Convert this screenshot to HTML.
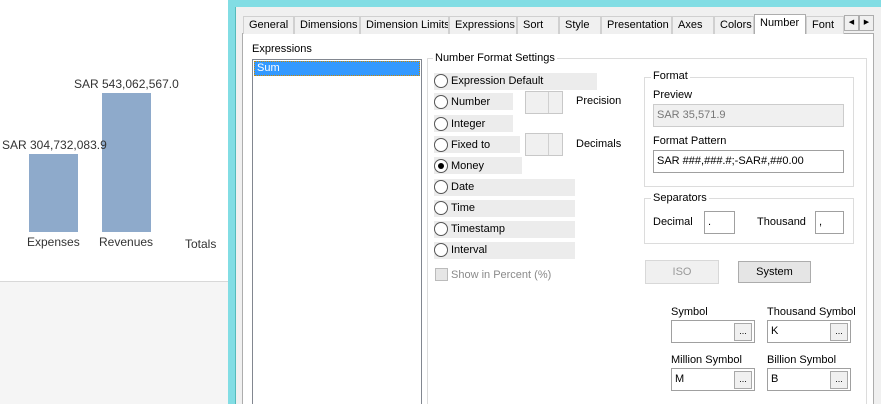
<!DOCTYPE html>
<html><head><meta charset="utf-8"><style>
*{margin:0;padding:0;box-sizing:border-box}
html,body{width:881px;height:404px;overflow:hidden}
body{position:relative;background:#f0f0f0;font-family:"Liberation Sans",sans-serif;font-size:11px;color:#000}
.a{position:absolute;white-space:nowrap}
.tab{position:absolute;top:16px;height:18px;border:1px solid #d0d0d0;border-bottom:none;background:#f0f0f0;padding:2px 0 0 5px;font-size:11px;white-space:nowrap;overflow:hidden}
.row{position:absolute;left:434px;height:17px;background:#ececec}
.rad{position:absolute;left:434px;width:14px;height:14px;border:1px solid #555;border-radius:50%;background:#fff}
.lbl{position:absolute;left:451px;font-size:11px;white-space:nowrap}
.spin{position:absolute;left:525px;width:38px;height:23px;border:1px solid #c8c8c8;background:#f0f0f0}
.spin:after{content:"";position:absolute;right:0;top:0;width:13px;height:21px;border-left:1px solid #d0d0d0}
.box{position:absolute;border:1px solid #a0a0a0;background:#fff;padding:4px 0 0 3px;font-size:11px;white-space:nowrap}
.grp{position:absolute;border:1px solid #dcdcdc}
.gt{position:absolute;background:#fff;padding:0 2px;font-size:11px;white-space:nowrap}
.dot{position:absolute;right:2px;top:2px;width:18px;height:18px;border:1px solid #a8a8a8;background:#f0f0f0;font-size:9px;text-align:center;line-height:14px}
</style></head><body>
<div class="a" style="left:0;top:0;width:228px;height:281px;background:#fff"></div>
<div class="a" style="left:0;top:281px;width:228px;height:123px;background:#f5f5f5;border-top:1px solid #d8d8d8"></div>
<div class="a" style="left:29px;top:154px;width:49px;height:78px;background:#8eaacb"></div>
<div class="a" style="left:102px;top:93px;width:49px;height:139px;background:#8eaacb"></div>
<div class="a" style="left:74px;top:77px;font-size:12px;color:#333">SAR 543,062,567.0</div>
<div class="a" style="left:2px;top:138px;font-size:12px;color:#333">SAR 304,732,083.9</div>
<div class="a" style="left:27px;top:235px;font-size:12px;color:#333">Expenses</div>
<div class="a" style="left:99px;top:235px;font-size:12px;color:#333">Revenues</div>
<div class="a" style="left:185px;top:237px;font-size:12px;color:#333">Totals</div>
<div class="a" style="left:228px;top:0;width:8px;height:404px;background:#82dde4;border-right:1px solid #5bb"></div>
<div class="a" style="left:228px;top:0;width:653px;height:7px;background:#82dde4"></div>
<div class="a" style="left:242px;top:33px;width:632px;height:380px;background:#fff;border:1px solid #adadad"></div>
<div class="tab" style="left:243px;width:51px">General</div>
<div class="tab" style="left:294px;width:66px">Dimensions</div>
<div class="tab" style="left:360px;width:89px">Dimension Limits</div>
<div class="tab" style="left:449px;width:68px">Expressions</div>
<div class="tab" style="left:517px;width:42px">Sort</div>
<div class="tab" style="left:559px;width:42px">Style</div>
<div class="tab" style="left:601px;width:71px">Presentation</div>
<div class="tab" style="left:672px;width:42px">Axes</div>
<div class="tab" style="left:714px;width:40px">Colors</div>
<div class="tab" style="left:754px;top:14px;height:20px;width:52px;background:#fff;border-color:#adadad">Number</div>
<div class="tab" style="left:806px;width:38px">Font</div>
<div class="a" style="left:844px;top:15px;width:15px;height:16px;border:1px solid #adadad;background:#f0f0f0;font-size:7px;text-align:center;line-height:14px">◀</div>
<div class="a" style="left:859px;top:15px;width:15px;height:16px;border:1px solid #adadad;background:#f0f0f0;font-size:7px;text-align:center;line-height:14px">▶</div>
<div class="a" style="left:252px;top:43px">Expressions</div>
<div class="a" style="left:252px;top:59px;width:170px;height:350px;border:1px solid #828790;background:#fff"></div>
<div class="a" style="left:254px;top:61px;width:166px;height:15px;background:#3399ff;border:1px dotted #c80;color:#fff;padding-left:2px;line-height:13px">Sum</div>
<div class="grp" style="left:427px;top:58px;width:440px;height:360px"></div>
<div class="gt" style="left:433px;top:52px">Number Format Settings</div>
<div class="row" style="top:73px;width:163px"></div>
<div class="row" style="top:93px;width:79px"></div>
<div class="row" style="top:115px;width:79px"></div>
<div class="row" style="top:136px;width:86px"></div>
<div class="row" style="top:157px;width:88px"></div>
<div class="row" style="top:179px;width:141px"></div>
<div class="row" style="top:200px;width:141px"></div>
<div class="row" style="top:221px;width:141px"></div>
<div class="row" style="top:242px;width:141px"></div>
<div class="rad" style="top:74px"></div><div class="lbl" style="top:75px">Expression Default</div>
<div class="rad" style="top:95px"></div><div class="lbl" style="top:96px">Number</div>
<div class="rad" style="top:117px"></div><div class="lbl" style="top:118px">Integer</div>
<div class="rad" style="top:138px"></div><div class="lbl" style="top:139px">Fixed to</div>
<div class="rad" style="top:159px"><div style="position:absolute;left:3px;top:3px;width:6px;height:6px;border-radius:50%;background:#000"></div></div><div class="lbl" style="top:160px">Money</div>
<div class="rad" style="top:180px"></div><div class="lbl" style="top:181px">Date</div>
<div class="rad" style="top:201px"></div><div class="lbl" style="top:202px">Time</div>
<div class="rad" style="top:222px"></div><div class="lbl" style="top:223px">Timestamp</div>
<div class="rad" style="top:243px"></div><div class="lbl" style="top:244px">Interval</div>
<div class="a" style="left:435px;top:268px;width:13px;height:13px;border:1px solid #bbb;background:#e6e6e6"></div>
<div class="lbl" style="top:269px;color:#8a8a8a">Show in Percent (%)</div>
<div class="spin" style="top:91px"></div><div class="a" style="left:576px;top:95px">Precision</div>
<div class="spin" style="top:133px"></div><div class="a" style="left:576px;top:138px">Decimals</div>
<div class="grp" style="left:644px;top:77px;width:210px;height:110px"></div>
<div class="gt" style="left:651px;top:70px">Format</div>
<div class="a" style="left:653px;top:89px">Preview</div>
<div class="box" style="left:653px;top:104px;width:191px;height:23px;background:#f0f0f0;border-color:#ccc;color:#777">SAR 35,571.9</div>
<div class="a" style="left:653px;top:135px">Format Pattern</div>
<div class="box" style="left:653px;top:150px;width:191px;height:23px">SAR ###,###.#;-SAR#,##0.00</div>
<div class="grp" style="left:644px;top:198px;width:210px;height:46px"></div>
<div class="gt" style="left:651px;top:192px">Separators</div>
<div class="a" style="left:653px;top:216px">Decimal</div>
<div class="box" style="left:704px;top:211px;width:31px;height:23px">.</div>
<div class="a" style="left:757px;top:216px">Thousand</div>
<div class="box" style="left:815px;top:211px;width:29px;height:23px">,</div>
<div class="a" style="left:645px;top:260px;width:74px;height:24px;border:1px solid #d8d8d8;background:#f0f0f0;color:#999;text-align:center;line-height:22px">ISO</div>
<div class="a" style="left:738px;top:261px;width:73px;height:22px;border:1px solid #acacac;background:#e5e5e5;text-align:center;line-height:20px">System</div>
<div class="a" style="left:671px;top:306px">Symbol</div>
<div class="a" style="left:767px;top:306px">Thousand Symbol</div>
<div class="box" style="left:671px;top:320px;width:84px;height:23px"><div class="dot">...</div></div>
<div class="box" style="left:767px;top:320px;width:84px;height:23px">K<div class="dot">...</div></div>
<div class="a" style="left:671px;top:354px">Million Symbol</div>
<div class="a" style="left:767px;top:354px">Billion Symbol</div>
<div class="box" style="left:671px;top:368px;width:84px;height:23px">M<div class="dot">...</div></div>
<div class="box" style="left:767px;top:368px;width:84px;height:23px">B<div class="dot">...</div></div>
</body></html>
